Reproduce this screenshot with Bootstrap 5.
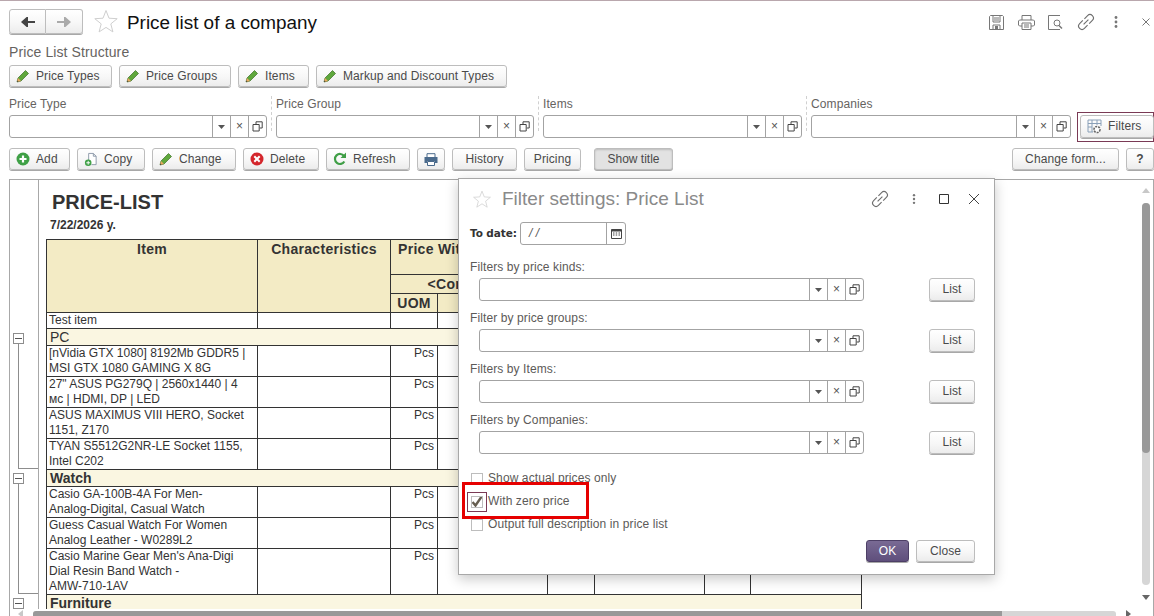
<!DOCTYPE html>
<html lang="en">
<head>
  <meta charset="UTF-8">
  <title>Price list of a company</title>
  <link href="https://cdn.jsdelivr.net/npm/bootstrap@5.3.0/dist/css/bootstrap.min.css" rel="stylesheet">
  <style>
    html, body { height: 616px; overflow: hidden; }
    body {
      position: relative;
      background: #fff;
      color: #4a4a4a;
      font: 12px/15px "Liberation Sans", Arial, sans-serif;
      border-top: 1px solid #b9a7ad;
    }
    svg { display: block; flex: none; }

    /* buttons */
    .ui-btn {
      display: flex; align-items: center; justify-content: center; gap: 6px;
      height: 22px; padding: 0; flex: none;
      font: 12px/15px "Liberation Sans", Arial, sans-serif; letter-spacing: .1px;
      color: #4a4a4a;
      background: linear-gradient(#fff, #f7f7f7 55%, #ececec);
      border: 1px solid #bdbdbd; border-radius: 3px;
      box-shadow: 0 1px 0 #a8a8a8;
    }
    .ui-btn:hover { color: #4a4a4a; background: #eee; border-color: #bdbdbd; }
    .ui-btn.ico-left { justify-content: flex-start; padding-left: 6px; }
    .ui-btn.pressed { background: #e2e2e2; box-shadow: inset 0 1px 2px #bbb, 0 1px 0 #a8a8a8; letter-spacing: 0; }
    .ui-btn.primary { background: linear-gradient(#796a94, #5f4f7c); color: #fff; border-color: #4d3f66; }

    /* top bar */
    .top-bar { padding: 8px 0 0 9px; height: 35px; }
    .nav-pair { width: 74px; height: 27px; }
    .nav-pair .ui-btn { height: 25px; width: 37px; border-radius: 3px 0 0 3px; }
    .nav-pair .ui-btn + .ui-btn { border-left: 0; border-radius: 0 3px 3px 0; }
    .fav-star { margin-left: 11px; }
    .page-title { font-size: 18.9px; line-height: 28px; color: #111; margin: 0 0 0 9px; font-weight: 400; }
    .top-icons { margin-top: 4px; }
    .ico-slot { width: 30px; display: flex; justify-content: center; }
    .ico-slot.end { margin-right: -7px; }

    .struct-label { font-size: 14px; line-height: 16px; margin: 8px 0 5px 9px; color: #66635f; letter-spacing: .1px; }
    .btn-row { padding-left: 9px; gap: 7px; }
    .w-pt { width: 103px; } .w-pg { width: 112px; } .w-it { width: 71px; } .w-md { width: 191px; }

    /* filter line */
    .filter-line { margin: 9px 0 0 9px; height: 35px; }
    .filter-cell { width: 263px; margin-right: 4px; padding-right: 4px; border-right: 1px dashed #d0d0d0; }
    .filter-cell.wide { width: 264px; }
    .filter-cell .field-cap { height: 19px; line-height: 16px; color: #66635f; letter-spacing: .1px; }
    .filter-cell.last { width: 260px; border: 0; padding: 0; margin: 0; }
    .field { height: 23px; background: #fff; border: 1px solid #a3a3a3; border-radius: 3px; }
    .field i { flex: 1; }
    .field b {
      width: 18px; border-left: 1px solid #a3a3a3; display: flex;
      align-items: center; justify-content: center; font-weight: 400; color: #555;
    }
    .filters-box { position: absolute; left: 1077px; top: 111px; width: 77px; height: 30px; border: 1px solid #7a3a55; padding: 2px 0 0 2px; }
    .filters-box .ui-btn { width: 74px; height: 23px; }

    .act-row { margin-top: 17px; padding: 0 0 0 9px; gap: 7px; }
    .w-add { width: 61px; } .w-copy { width: 68px; } .w-chg { width: 84px; } .w-del { width: 76px; } .w-ref { width: 84px; }
    .w-prn { width: 28px; } .w-his { width: 65px; } .w-pri { width: 57px; margin-right: 6px; } .w-sho { width: 79px; }
    .w-cf { width: 107px; } .w-q { width: 28px; font-weight: 700; }

    /* report area */
    .sheet {
      margin: 9px 0 0 9px; height: 437px; display: flex; overflow: hidden;
      border: 1px solid #a8a8a8; border-bottom: 0;
    }
    .gutter { width: 29px; height: 429px; flex: none; border-right: 1px solid #a8a8a8; padding-top: 153px; }
    .grp { margin-left: 3px; width: 25px; margin-bottom: 4px; }
    .grp-box { width: 11px; height: 11px; border: 1px solid #8d8d8d; display: flex; align-items: center; justify-content: center; background: #fff; }
    .grp-box::after { content: ""; width: 7px; height: 1px; background: #555; }
    .grp-line { margin-left: 5px; border-left: 1px solid #8d8d8d; border-bottom: 1px solid #8d8d8d; }
    .h1-line { height: 125px; }
    .h2-line { height: 110px; }
    .report { height: 429px; overflow: hidden; flex: 1; padding-left: 7px; color: #333; }
    .rep-title { font-size: 20px; line-height: 24px; font-weight: 700; margin: 10px 0 0 6px; }
    .rep-date { font-size: 12px; line-height: 15px; font-weight: 700; margin: 4px 0 6px 4px; }
    .price-grid { table-layout: fixed; border-collapse: collapse; width: 815px; }
    .price-grid td, .price-grid th { border: 1px solid #333; padding: 0 2px; line-height: 15px; vertical-align: top; }
    .price-grid th { background: #f3ebc5; font-size: 14px; font-weight: 700; text-align: center; letter-spacing: .3px; padding-top: 2px; }
    .price-grid .r1 { height: 35px; } .price-grid .r2, .price-grid .r3 { height: 19px; }
    .price-grid .hl { text-align: left; padding-left: 7px; }
    .price-grid td.gr { background: #faf6e1; font-size: 14px; line-height: 16px; padding-left: 3px; }
    .price-grid td.gb { font-weight: 700; }
    .price-grid td.num { text-align: right; padding-right: 3px; }

    /* scroll bars */
    .vbar-track { position: absolute; left: 1142px; top: 202px; width: 8px; height: 382px; background: #d6d6d6; border-radius: 4px; }
    .vbar-thumb { height: 250px; background: #999; border-radius: 4px; }
    .hbar-track { position: absolute; left: 33px; top: 610px; width: 1083px; height: 6px; background: #d6d6d6; border-radius: 3px 3px 0 0; }
    .hbar-thumb { width: 969px; height: 6px; background: #999; border-radius: 3px 0 0 0; }
    .sc-arrow { position: absolute; width: 0; height: 0; border: 4px solid transparent; }
    .sc-up { left: 1142px; top: 187px; border-bottom: 5px solid #c8c8c8; border-top: 0; }
    .sc-down { left: 1142px; top: 594px; border-top: 5px solid #666; border-bottom: 0; }
    .sc-left { left: 18px; top: 609px; border-right: 5px solid #c8c8c8; border-left: 0; }
    .sc-right { left: 1126px; top: 609px; border-left: 5px solid #666; border-right: 0; }

    /* filter window */
    .filter-win {
      position: absolute; left: 458px; top: 177px; width: 537px; height: 397px;
      background: #fff; border: 1px solid #a8a8a8; border-radius: 0;
      box-shadow: 0 4px 12px rgba(0, 0, 0, .22);
      padding: 0 19px 0 11px; color: #5c5a58;
    }
    .win-head { height: 38px; padding: 2px 0 0 3px; }
    .win-title { font-size: 19px; line-height: 38px; color: #8a8a8a; margin: 0 0 0 11px; font-weight: 400; }
    .win-icons { gap: 19px; margin-right: -5px; }
    .date-row { height: 23px; margin-top: 5px; }
    .date-cap { font: 700 10.5px/23px "DejaVu Sans", "Liberation Sans", sans-serif; color: #333; width: 50px; letter-spacing: -.1px; }
    .date-field { width: 106px; height: 23px; }
    .date-field i { padding-left: 8px; font-style: italic; line-height: 20px; color: #555; }
    .date-field b { width: 19px; }
    .flt-cap { line-height: 15px; height: 15px; margin-top: 15px; letter-spacing: .1px; }
    .flt-cap.tight { margin-top: 10px; }
    .flt-row { margin: 3px 0 0 9px; }
    .flt-row .field { width: 386px; }
    .flt-row .ui-btn { width: 46px; height: 23px; margin-left: 65px; }
    .chk-list { margin-top: 17px; gap: 8px; }
    .chk-line { height: 15px; gap: 5px; padding-left: 1px; color: #5c5a58; letter-spacing: .1px; }
    .chk-line .form-check-input {
      width: 12px; height: 12px; margin: 0; border: 1px solid #bdbdbd; border-radius: 0; background-color: #fff; flex: none;
    }
    .chk-line .form-check-input:checked {
      background-color: #fff; border-color: #bdbdbd;
      background-image: url("data:image/svg+xml,%3Csvg xmlns='http://www.w3.org/2000/svg' viewBox='0 0 12 12'%3E%3Cpath d='M1.5 6l3 3.5L11 0' fill='none' stroke='%23665e50' stroke-width='2.4'/%3E%3C/svg%3E");
      background-size: 12px 12px;
    }
    .chk-line .form-check-input:focus { box-shadow: none; }
    .chk-focus { outline: 1px solid #7a3a55; outline-offset: 3px; }
    .win-foot { gap: 7px; margin-top: 8px; }
    .w-ok { width: 43px; } .w-close { width: 59px; }
    .red-mark { position: absolute; left: 462px; top: 481px; width: 127px; height: 37px; border: 3px solid #e60000; pointer-events: none; }
  </style>
</head>
<body>
  <svg width="0" height="0" class="position-absolute">
    <defs>
      <symbol id="pencil" viewBox="0 0 14 14">
        <path d="M1 13l1-4 7.5-7.5 3 3L5 12z" fill="#5fa83c" stroke="#3c6e27" stroke-width=".7"/>
        <path d="M1 13l1-4 3 3z" fill="#e9a860"/>
        <path d="M1 13l.4-1.6 1.2 1.2z" fill="#333"/>
      </symbol>
      <symbol id="stack" viewBox="0 0 11 11">
        <path d="M4 3V.8h6.2V7H7.8" fill="none" stroke="#444"/>
        <path d="M1 3.5h6.2V10H1z" fill="none" stroke="#444"/>
      </symbol>
      <symbol id="star" viewBox="0 0 24 24">
        <path d="M12 1.5l3 7.7 8.2.5-6.4 5.2 2.1 8-6.9-4.5-6.9 4.5 2.1-8L.8 9.7 9 9.2z" fill="#fff" stroke="#cfcfcf"/>
      </symbol>
      <symbol id="chain" viewBox="0 0 16 16">
        <g transform="rotate(-45 8 8)" fill="none" stroke="#6e6e6e">
          <path d="M7 5H3a3 3 0 0 0 0 6h4"/>
          <path d="M9 5h4a3 3 0 0 1 0 6H9"/>
          <path d="M5 8h6"/>
        </g>
      </symbol>
      <symbol id="dots" viewBox="0 0 4 14">
        <circle cx="2" cy="2.5" r="1.4" fill="#777"/><circle cx="2" cy="7" r="1.4" fill="#777"/><circle cx="2" cy="11.5" r="1.4" fill="#777"/>
      </symbol>
    </defs>
  </svg>

  <div class="top-bar d-flex align-items-start">
    <div class="nav-pair d-flex">
      <button class="ui-btn"><svg width="14" height="10" viewBox="0 0 14 10"><path d="M14 5H5M6 1L1.5 5 6 9z" fill="#444" stroke="#444" stroke-width="2"/></svg></button>
      <button class="ui-btn"><svg width="14" height="10" viewBox="0 0 14 10"><path d="M0 5h9M8 1l4.5 4L8 9z" fill="#aaa" stroke="#aaa" stroke-width="2"/></svg></button>
    </div>
    <svg class="fav-star" width="24" height="24"><use href="#star"/></svg>
    <h1 class="page-title">Price list of a company</h1>
    <div class="top-icons d-flex align-items-center ms-auto">
      <span class="ico-slot"><svg width="15" height="15" viewBox="0 0 15 15"><path d="M1.5 .5h12l1 1v13H.5V1.500zM4 .5V7h7V.5M5 3h5M5 5h5M4 14.500V10h7v4.500" fill="none" stroke="#777"/><path d="M6 11h3v3H6z" fill="#777"/></svg></span>
      <span class="ico-slot"><svg width="17" height="15" viewBox="0 0 17 15"><path d="M4 5V.5h9V5M4 11H1.500L.5 10V6l1-1h14l1 1v4l-1 1H13M4 8h9v6.500H4zM6 10h5M6 12h5" fill="none" stroke="#777"/></svg></span>
      <span class="ico-slot"><svg width="16" height="15" viewBox="0 0 16 15"><path d="M12 14.500H.5V.5H12" fill="none" stroke="#777"/><circle cx="9" cy="8" r="3" fill="none" stroke="#777"/><path d="M11 10.500l3 3" stroke="#777" stroke-width="1.500"/></svg></span>
      <span class="ico-slot"><svg width="18" height="18"><use href="#chain"/></svg></span>
      <span class="ico-slot"><svg width="4" height="14"><use href="#dots"/></svg></span>
      <span class="ico-slot end"><svg width="8" height="8" viewBox="0 0 8 8"><path d="M.5.5l7 7M7.500.5l-7 7" stroke="#777"/></svg></span>
    </div>
  </div>

  <div class="struct-label">Price List Structure</div>
  <div class="btn-row d-flex">
    <button class="ui-btn ico-left w-pt"><svg width="14" height="14"><use href="#pencil"/></svg>Price Types</button>
    <button class="ui-btn ico-left w-pg"><svg width="14" height="14"><use href="#pencil"/></svg>Price Groups</button>
    <button class="ui-btn ico-left w-it"><svg width="14" height="14"><use href="#pencil"/></svg>Items</button>
    <button class="ui-btn ico-left w-md"><svg width="14" height="14"><use href="#pencil"/></svg>Markup and Discount Types</button>
  </div>

  <div class="filter-line d-flex">
    <div class="filter-cell">
      <div class="field-cap">Price Type</div>
      <div class="field d-flex"><i></i><b><svg width="7" height="4" viewBox="0 0 7 4"><path d="M0 0h7L3.500 4z" fill="#555"/></svg></b><b>×</b><b><svg width="11" height="11"><use href="#stack"/></svg></b></div>
    </div>
    <div class="filter-cell">
      <div class="field-cap">Price Group</div>
      <div class="field d-flex"><i></i><b><svg width="7" height="4" viewBox="0 0 7 4"><path d="M0 0h7L3.500 4z" fill="#555"/></svg></b><b>×</b><b><svg width="11" height="11"><use href="#stack"/></svg></b></div>
    </div>
    <div class="filter-cell wide">
      <div class="field-cap">Items</div>
      <div class="field d-flex"><i></i><b><svg width="7" height="4" viewBox="0 0 7 4"><path d="M0 0h7L3.500 4z" fill="#555"/></svg></b><b>×</b><b><svg width="11" height="11"><use href="#stack"/></svg></b></div>
    </div>
    <div class="filter-cell last">
      <div class="field-cap">Companies</div>
      <div class="field d-flex"><i></i><b><svg width="7" height="4" viewBox="0 0 7 4"><path d="M0 0h7L3.500 4z" fill="#555"/></svg></b><b>×</b><b><svg width="11" height="11"><use href="#stack"/></svg></b></div>
    </div>
  </div>
  <div class="filters-box">
    <button class="ui-btn ico-left">
      <svg width="15" height="15" viewBox="0 0 15 15"><path d="M1 1h13v6M1 1v12h5M1 4.500h13M5 1v12M10 1v5M1 8h4" fill="none" stroke="#8aa0b8"/><circle cx="10" cy="10.500" r="3" fill="#fff" stroke="#666" stroke-width="1.600" stroke-dasharray="2 1"/></svg>
      Filters
    </button>
  </div>

  <div class="act-row d-flex">
    <button class="ui-btn ico-left w-add"><svg width="14" height="14" viewBox="0 0 14 14"><circle cx="7" cy="7" r="6.500" fill="#3fa046"/><path d="M3.500 7h7M7 3.500v7" stroke="#fff" stroke-width="2.200"/></svg>Add</button>
    <button class="ui-btn ico-left w-copy"><svg width="14" height="15" viewBox="0 0 15 15"><path d="M5 9V1h5l3 3v9H8" fill="#fff" stroke="#8a97a8"/><path d="M10 1v3h3" fill="none" stroke="#8a97a8"/><circle cx="4.500" cy="11" r="3.500" fill="#3fa046"/><path d="M2.500 11h4M4.500 9v4" stroke="#fff"/></svg>Copy</button>
    <button class="ui-btn ico-left w-chg"><svg width="14" height="14"><use href="#pencil"/></svg>Change</button>
    <button class="ui-btn ico-left w-del"><svg width="14" height="14" viewBox="0 0 14 14"><circle cx="7" cy="7" r="6.500" fill="#d4262c"/><path d="M4.300 4.300l5.400 5.400M9.700 4.300L4.300 9.700" stroke="#fff" stroke-width="2"/></svg>Delete</button>
    <button class="ui-btn ico-left w-ref"><svg width="14" height="14" viewBox="0 0 14 14"><path d="M11.300 9.500A5 5 0 1 1 11 4" fill="none" stroke="#3f9e46" stroke-width="2.200"/><path d="M13 .5V6H7.500z" fill="#3f9e46"/></svg>Refresh</button>
    <button class="ui-btn w-prn"><svg width="14" height="13" viewBox="0 0 14 13"><path d="M3 4V.7h8V4" fill="#fff" stroke="#4a6a8c"/><path d="M.5 4h13v6H11V8H3v2H.5z" fill="#4a6a8c"/><path d="M3.500 8.500h7v4h-7z" fill="#fff" stroke="#4a6a8c"/></svg></button>
    <button class="ui-btn w-his">History</button>
    <button class="ui-btn w-pri">Pricing</button>
    <button class="ui-btn w-sho pressed">Show title</button>
    <button class="ui-btn w-cf ms-auto">Change form...</button>
    <button class="ui-btn w-q">?</button>
  </div>

  <div class="sheet">
    <div class="gutter">
      <div class="grp"><div class="grp-box"></div><div class="grp-line h1-line"></div></div>
      <div class="grp"><div class="grp-box"></div><div class="grp-line h2-line"></div></div>
      <div class="grp"><div class="grp-box"></div></div>
    </div>
    <div class="report">
      <div class="rep-title">PRICE-LIST</div>
      <div class="rep-date">7/22/2026 y.</div>
      <table class="price-grid">
        <colgroup>
          <col style="width:211px"><col style="width:133px"><col style="width:47px"><col style="width:110px">
          <col style="width:47px"><col style="width:110px"><col style="width:46px"><col style="width:111px">
        </colgroup>
        <tr class="r1"><th rowspan="3">Item</th><th rowspan="3">Characteristics</th><th colspan="2" class="hl">Price With VAT</th><th colspan="2"></th><th colspan="2"></th></tr>
        <tr class="r2"><th colspan="2">&lt;Company&gt;</th><th colspan="2"></th><th colspan="2"></th></tr>
        <tr class="r3"><th>UOM</th><th></th><th></th><th></th><th></th><th></th></tr>
        <tr><td>Test item</td><td></td><td></td><td></td><td></td><td></td><td></td><td></td></tr>
        <tr><td colspan="8" class="gr">PC</td></tr>
        <tr><td>[nVidia GTX 1080] 8192Mb GDDR5 |<br>MSI GTX 1080 GAMING X 8G</td><td></td><td class="num">Pcs</td><td></td><td></td><td></td><td></td><td></td></tr>
        <tr><td>27" ASUS PG279Q | 2560x1440 | 4<br>мс | HDMI, DP | LED</td><td></td><td class="num">Pcs</td><td></td><td></td><td></td><td></td><td></td></tr>
        <tr><td>ASUS MAXIMUS VIII HERO, Socket<br>1151, Z170</td><td></td><td class="num">Pcs</td><td></td><td></td><td></td><td></td><td></td></tr>
        <tr><td>TYAN S5512G2NR-LE Socket 1155,<br>Intel C202</td><td></td><td class="num">Pcs</td><td></td><td></td><td></td><td></td><td></td></tr>
        <tr><td colspan="8" class="gr gb">Watch</td></tr>
        <tr><td>Casio GA-100B-4A For Men-<br>Analog-Digital, Casual Watch</td><td></td><td class="num">Pcs</td><td></td><td></td><td></td><td></td><td></td></tr>
        <tr><td>Guess Casual Watch For Women<br>Analog Leather - W0289L2</td><td></td><td class="num">Pcs</td><td></td><td></td><td></td><td></td><td></td></tr>
        <tr><td>Casio Marine Gear Men's Ana-Digi<br>Dial Resin Band Watch -<br>AMW-710-1AV</td><td></td><td class="num">Pcs</td><td></td><td></td><td></td><td></td><td></td></tr>
        <tr><td colspan="8" class="gr gb">Furniture</td></tr>
      </table>
    </div>
  </div>

  <div class="sc-arrow sc-up"></div>
  <div class="vbar-track"><div class="vbar-thumb"></div></div>
  <div class="sc-arrow sc-down"></div>
  <div class="sc-arrow sc-left"></div>
  <div class="hbar-track"><div class="hbar-thumb"></div></div>
  <div class="sc-arrow sc-right"></div>

  <div class="filter-win d-flex flex-column">
    <div class="win-head d-flex align-items-center">
      <svg width="18" height="18"><use href="#star"/></svg>
      <h2 class="win-title">Filter settings: Price List</h2>
      <div class="win-icons d-flex align-items-center ms-auto">
        <svg width="18" height="18"><use href="#chain"/></svg>
        <svg width="4" height="12" class="mx-1"><use href="#dots"/></svg>
        <svg width="10" height="10" viewBox="0 0 10 10"><path d="M.5.5h9v9h-9z" fill="none" stroke="#333"/></svg>
        <svg width="12" height="12" viewBox="0 0 12 12"><path d="M1 1l10 10M11 1L1 11" stroke="#444"/></svg>
      </div>
    </div>
    <div class="date-row d-flex">
      <div class="date-cap">To date:</div>
      <div class="field date-field d-flex"><i>/ /</i><b><svg width="11" height="11" viewBox="0 0 11 11"><path d="M.5 1.500h10v9H.5z" fill="#fff" stroke="#444"/><path d="M.5 1.500h10v2H.5z" fill="#444"/><path d="M2 5h1.500M4.700 5h1.500M7.500 5H9M2 7h1.500M4.700 7h1.500M7.500 7H9" stroke="#444"/></svg></b></div>
    </div>

    <div class="flt-cap">Filters by price kinds:</div>
    <div class="flt-row d-flex">
      <div class="field d-flex"><i></i><b><svg width="7" height="4" viewBox="0 0 7 4"><path d="M0 0h7L3.500 4z" fill="#555"/></svg></b><b>×</b><b><svg width="11" height="11"><use href="#stack"/></svg></b></div>
      <button class="ui-btn">List</button>
    </div>
    <div class="flt-cap tight">Filter by price groups:</div>
    <div class="flt-row d-flex">
      <div class="field d-flex"><i></i><b><svg width="7" height="4" viewBox="0 0 7 4"><path d="M0 0h7L3.500 4z" fill="#555"/></svg></b><b>×</b><b><svg width="11" height="11"><use href="#stack"/></svg></b></div>
      <button class="ui-btn">List</button>
    </div>
    <div class="flt-cap tight">Filters by Items:</div>
    <div class="flt-row d-flex">
      <div class="field d-flex"><i></i><b><svg width="7" height="4" viewBox="0 0 7 4"><path d="M0 0h7L3.500 4z" fill="#555"/></svg></b><b>×</b><b><svg width="11" height="11"><use href="#stack"/></svg></b></div>
      <button class="ui-btn">List</button>
    </div>
    <div class="flt-cap tight">Filters by Companies:</div>
    <div class="flt-row d-flex">
      <div class="field d-flex"><i></i><b><svg width="7" height="4" viewBox="0 0 7 4"><path d="M0 0h7L3.500 4z" fill="#555"/></svg></b><b>×</b><b><svg width="11" height="11"><use href="#stack"/></svg></b></div>
      <button class="ui-btn">List</button>
    </div>

    <div class="chk-list d-flex flex-column">
      <label class="chk-line d-flex align-items-center"><input class="form-check-input" type="checkbox">Show actual prices only</label>
      <label class="chk-line d-flex align-items-center"><input class="form-check-input chk-focus" type="checkbox" checked>With zero price</label>
      <label class="chk-line d-flex align-items-center"><input class="form-check-input" type="checkbox">Output full description in price list</label>
    </div>

    <div class="win-foot d-flex justify-content-end">
      <button class="ui-btn primary w-ok">OK</button>
      <button class="ui-btn w-close">Close</button>
    </div>
  </div>
  <div class="red-mark"></div>

  <script src="https://cdn.jsdelivr.net/npm/bootstrap@5.3.0/dist/js/bootstrap.bundle.min.js"></script>
</body>
</html>
